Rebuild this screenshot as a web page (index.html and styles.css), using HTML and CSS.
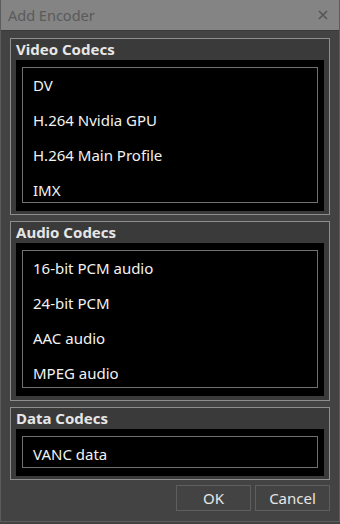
FILE: index.html
```html
<!DOCTYPE html>
<html>
<head>
<meta charset="utf-8">
<link rel="stylesheet" href="styles.css">
</head>
<body>
<div class="window">
  <div class="titlebar">
    <span class="title">Add Encoder</span>
    <svg class="close" width="10" height="10" viewBox="0 0 10 10"><path d="M1 1L9 9M9 1L1 9" stroke="#555" stroke-width="1.6" fill="none"/></svg>
  </div>
  <div class="content">
    <div class="group">
      <div class="group-head">Video Codecs</div>
      <div class="panel">
        <div class="list list-tall">
          <div class="item">DV</div>
          <div class="item">H.264 Nvidia GPU</div>
          <div class="item">H.264 Main Profile</div>
          <div class="item">IMX</div>
        </div>
      </div>
    </div>
    <div class="group group-audio">
      <div class="group-head">Audio Codecs</div>
      <div class="panel">
        <div class="list list-tall">
          <div class="item">16-bit PCM audio</div>
          <div class="item">24-bit PCM</div>
          <div class="item">AAC audio</div>
          <div class="item">MPEG audio</div>
        </div>
      </div>
    </div>
    <div class="group">
      <div class="group-head">Data Codecs</div>
      <div class="panel">
        <div class="list list-short">
          <div class="item">VANC data</div>
        </div>
      </div>
    </div>
    <div class="buttons">
      <button class="btn">OK</button>
      <button class="btn">Cancel</button>
    </div>
  </div>
</div>
</body>
</html>
```
FILE: styles.css
```css
html, body {
  margin: 0;
  padding: 0;
  background: #434343;
}
body {
  font-family: "Noto Sans", "Open Sans", sans-serif;
  font-size: 15px;
}
.window {
  width: 340px;
  height: 522px;
  box-sizing: border-box;
  border: 1px solid #5c5c5c;
  border-top: none;
  background: #434343;
  display: flex;
  flex-direction: column;
}
.titlebar {
  height: 30px;
  flex: none;
  background: #848484;
  display: flex;
  align-items: center;
  justify-content: space-between;
  padding: 0 11px 0 7px;
  border-bottom: 1px solid #3a3a3a;
}
.title {
  color: #5a5a5a;
  font-size: 14.5px;
}
.close {
  display: block;
}
.content {
  padding: 7px 9px 0 9px;
  display: flex;
  flex-direction: column;
  gap: 6px;
}
.group {
  border: 1px solid #8e8e8e;
  background: #3a3a3a;
  padding: 0 5px 3px 5px;
}
.group-audio {
  padding-bottom: 4px;
}
.group-head {
  height: 21px;
  line-height: 21px;
  color: #e6e6e6;
  font-weight: bold;
  font-size: 15px;
}
.panel {
  background: #000;
  padding: 7px 6px 8px 6px;
}
.list {
  border: 1px solid #707070;
  overflow: hidden;
}
.list-tall {
  height: 134px;
}
.group-audio .list-tall {
  height: 136px;
}
.list-short {
  height: 30px;
}
.item {
  height: 35px;
  line-height: 35px;
  color: #f2f2f2;
  font-size: 15px;
  padding-left: 10px;
  white-space: nowrap;
}
.buttons {
  display: flex;
  justify-content: flex-end;
  gap: 4px;
  margin-top: -1px;
}
.btn {
  width: 75px;
  height: 26px;
  background: #434343;
  border: 1px solid #5e5e5e;
  color: #e6e6e6;
  font-family: "Noto Sans", "Open Sans", sans-serif;
  font-size: 15px;
  padding: 0;
}
```
